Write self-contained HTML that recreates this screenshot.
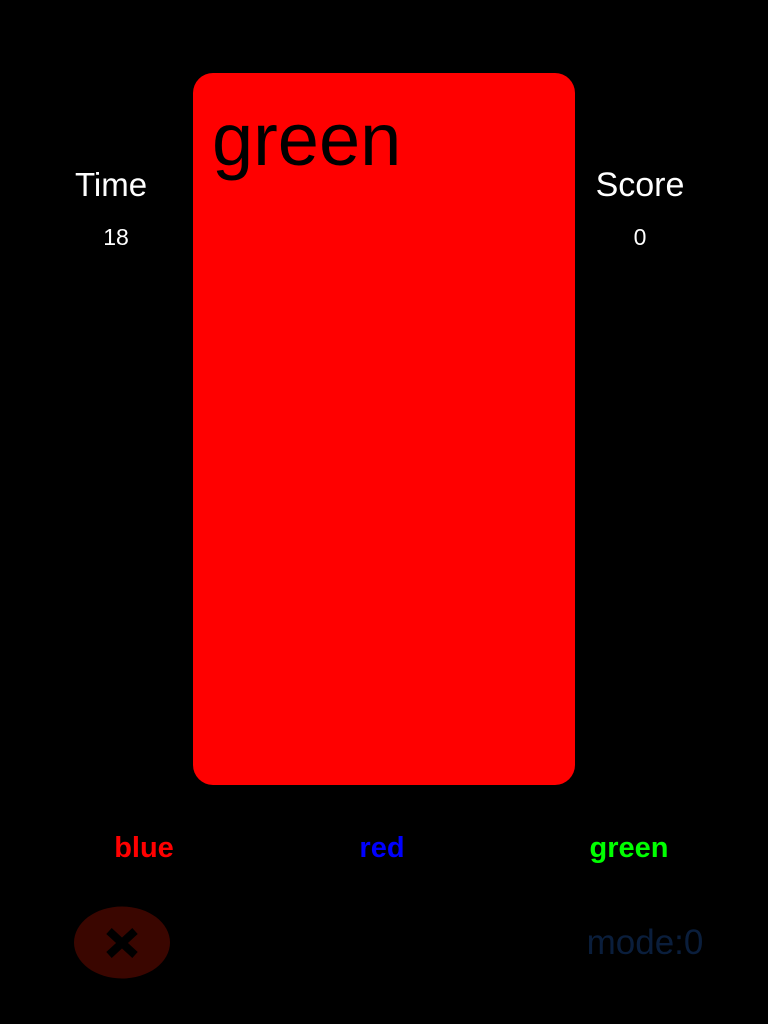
<!DOCTYPE html>
<html><head><style>
body{margin:0;width:768px;height:1024px;background:#000;position:relative;overflow:hidden;font-family:"Liberation Sans",sans-serif}
.t{position:absolute;white-space:nowrap;line-height:1;transform:translateX(-50%)}
</style></head><body>
<div style="position:absolute;left:193px;top:73px;width:382px;height:712px;background:#ff0000;border-radius:20px"></div>
<div style="position:absolute;left:212px;top:104px;font-size:74px;line-height:72px;color:#000">green</div>
<div class="t" style="left:111px;top:168px;font-size:33px;color:#fff">Time</div>
<div class="t" style="left:640px;top:168px;font-size:34px;color:#fff">Score</div>
<div class="t" style="left:116px;top:226px;font-size:23px;color:#fff">18</div>
<div class="t" style="left:640px;top:226px;font-size:23px;color:#fff">0</div>
<div class="t" style="left:144px;top:834px;font-size:29px;font-weight:bold;color:#ff0000">blue</div>
<div class="t" style="left:382px;top:834px;font-size:29px;font-weight:bold;color:#0000ff">red</div>
<div class="t" style="left:629px;top:834px;font-size:29px;font-weight:bold;color:#00ff00">green</div>
<svg style="position:absolute;left:73px;top:906px" width="98" height="73"><ellipse cx="49" cy="36.5" rx="48" ry="36" fill="#3a0600"/><path d="M36 25 L62 49 M62 25 L36 49" stroke="#000" stroke-width="8"/></svg>
<div class="t" style="left:645px;top:925px;font-size:35px;color:#0a1e3c">mode:0</div>
</body></html>
